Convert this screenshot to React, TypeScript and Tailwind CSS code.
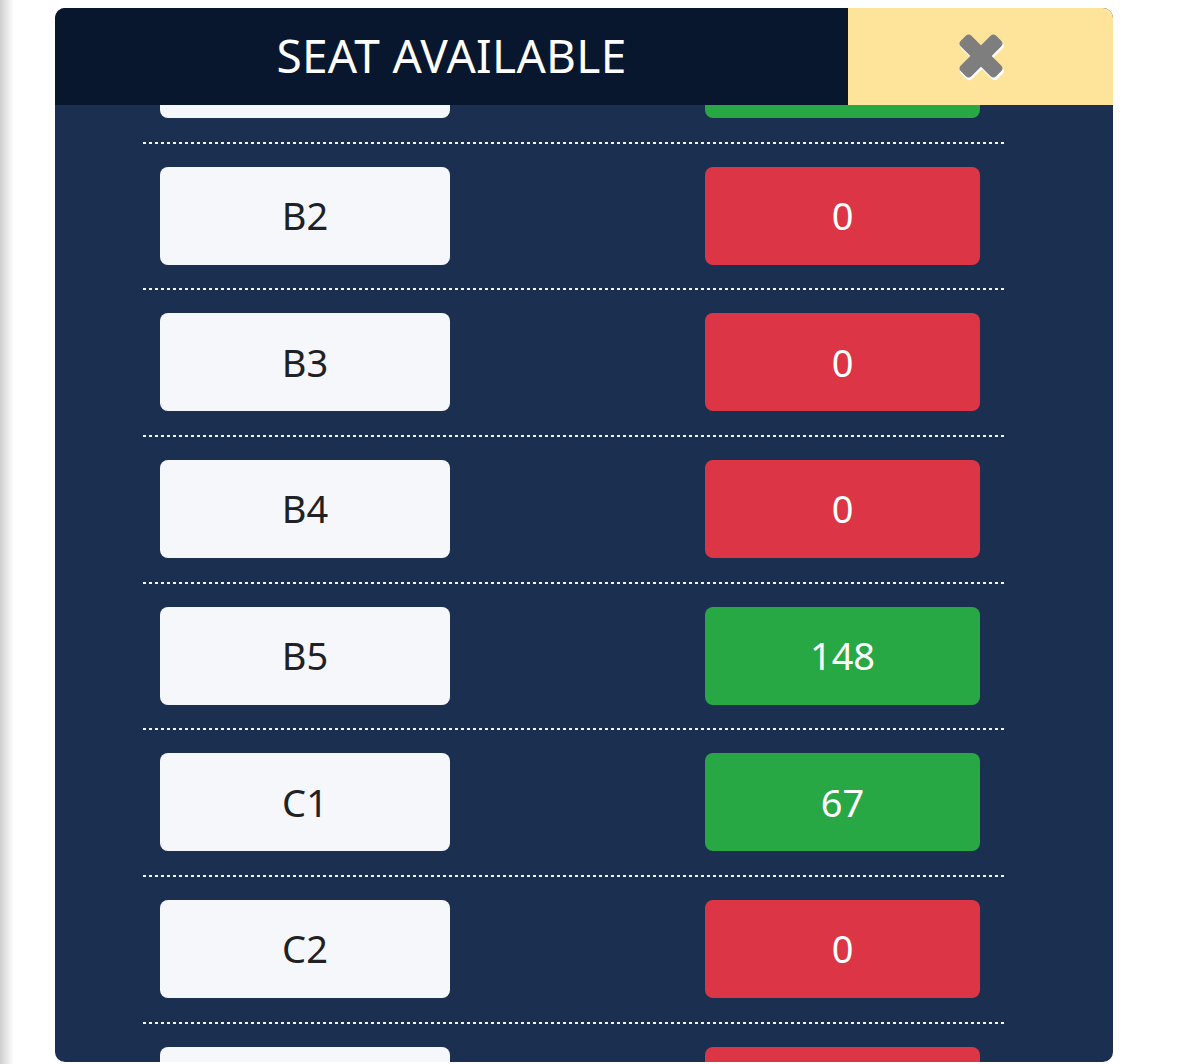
const rows: { seat: string; count: number }[] = [
  { seat: "B1", count: 52 },
  { seat: "B2", count: 0 },
  { seat: "B3", count: 0 },
  { seat: "B4", count: 0 },
  { seat: "B5", count: 148 },
  { seat: "C1", count: 67 },
  { seat: "C2", count: 0 },
  { seat: "C3", count: 0 },
];

function CloseIcon() {
  return (
    <svg width="56" height="56" viewBox="0 0 56 56">
      <g transform="rotate(45 28 28)">
        <rect x="21.5" y="3.5" width="15" height="51" rx="4" fill="#ffffff" />
        <rect x="3.5" y="21.5" width="51" height="15" rx="4" fill="#ffffff" />
      </g>
      <g transform="rotate(45 27 27)">
        <rect x="19.5" y="2" width="15" height="50" rx="4" fill="#7e7e7e" />
        <rect x="2" y="19.5" width="50" height="15" rx="4" fill="#7e7e7e" />
      </g>
    </svg>
  );
}

export default function App() {
  return (
    <div className="flex h-[1064px] w-[1200px] overflow-hidden bg-white" style={{ fontFamily: '"Noto Sans", "Open Sans", sans-serif' }}>
      <div className="w-[14px] shrink-0 bg-gradient-to-r from-[#cfcfcf] to-white" />
      <div className="ml-[41px] mt-[8px] flex h-[1054px] w-[1058px] flex-col overflow-hidden rounded-[10px] bg-[#1b2f50]">
        <div className="relative z-10 flex h-[97px] shrink-0">
          <div className="flex w-[793px] items-center justify-center bg-[#08172e] pb-[2px] text-[46px] font-normal tracking-[0.3px] text-white">
            SEAT AVAILABLE
          </div>
          <div className="flex flex-1 items-center justify-center bg-[#fee39a] pl-[2px]">
            <CloseIcon />
          </div>
        </div>
        <div className="flex-1 overflow-hidden">
          <div className="ml-[88px] mr-[108px] mt-[-108px]">
            {rows.map((r) => (
              <div key={r.seat}>
                <div className="flex items-center pt-[23px] pb-[23.67px]">
                  <div className="ml-[17px] flex h-[98px] w-[290px] items-center justify-center rounded-[8px] bg-[#f6f7fa] text-[38px] font-normal text-[#202124]">
                    {r.seat}
                  </div>
                  <div
                    className={
                      r.count > 0
                        ? "ml-[255px] flex h-[98px] w-[275px] items-center justify-center rounded-[8px] bg-[#28a745] text-[38px] font-normal text-white"
                        : "ml-[255px] flex h-[98px] w-[275px] items-center justify-center rounded-[8px] bg-[#dc3545] text-[38px] font-normal text-white"
                    }
                  >
                    {r.count}
                  </div>
                </div>
                <div className="h-[2px] bg-[repeating-linear-gradient(90deg,#f4f6fa_0px,#f4f6fa_3px,transparent_3px,transparent_6px)]" />
              </div>
            ))}
          </div>
        </div>
      </div>
    </div>
  );
}
